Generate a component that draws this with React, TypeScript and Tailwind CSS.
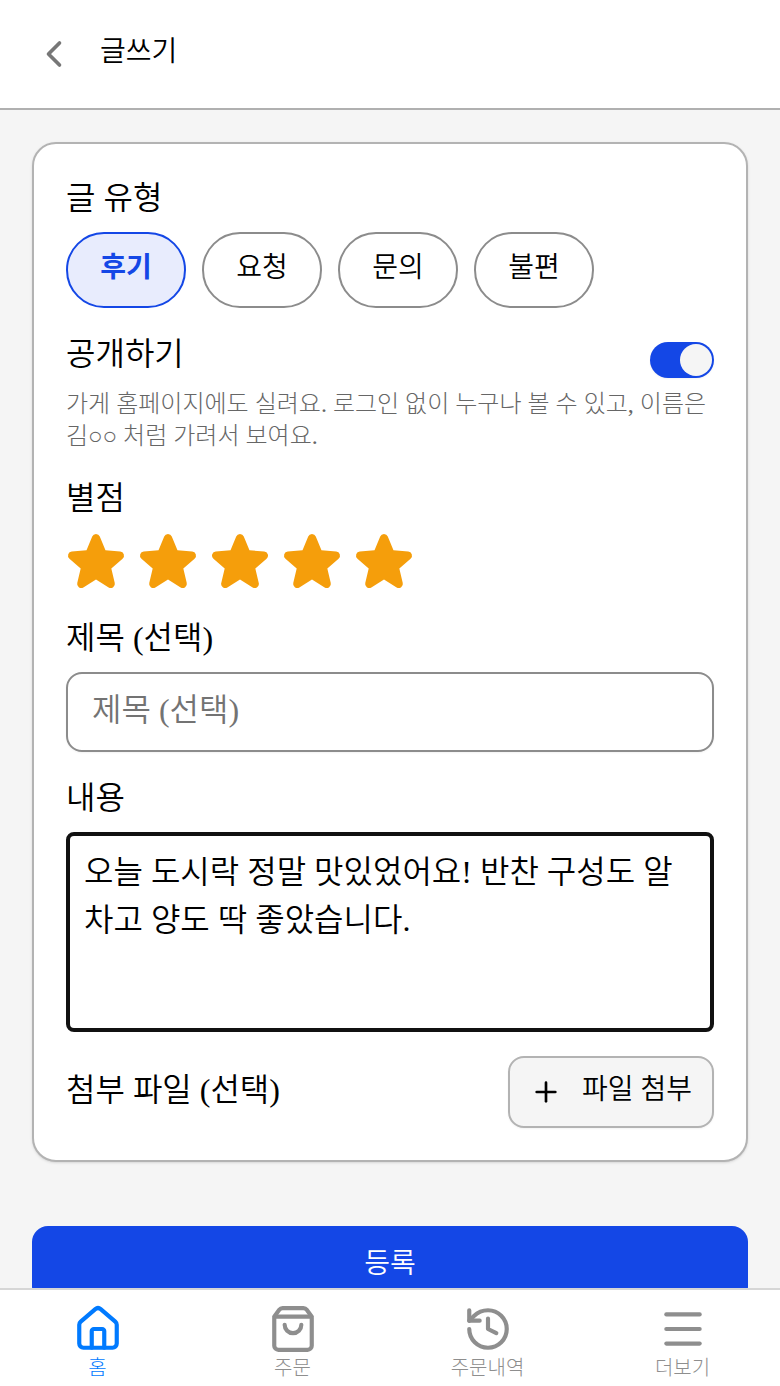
import { useState } from "react";
import type { ReactNode } from "react";
import { ChevronLeft, History, House, Menu, Plus, ShoppingBag } from "lucide-react";

const postTypes = ["후기", "요청", "문의", "불편"];

const tabs = [
  { label: "홈", Icon: House },
  { label: "주문", Icon: ShoppingBag },
  { label: "주문내역", Icon: History },
  { label: "더보기", Icon: Menu },
];

function Heading({ children }: { children: ReactNode }) {
  return <h2 className="text-[32px] leading-[48px]">{children}</h2>;
}

function StarIcon({ filled }: { filled: boolean }) {
  return (
    <svg viewBox="8 8 240 240" className={filled ? "size-[60px] fill-[#f59e0b]" : "size-[60px] fill-[#d4d4d4]"} aria-hidden="true">
      <path d="M234.29,114.85l-45,38.83L203,211.75a16.4,16.4,0,0,1-24.5,17.82L128,198.49,77.47,229.57A16.4,16.4,0,0,1,53,211.75l13.76-58.07-45-38.83A16.46,16.46,0,0,1,31.08,86l59-4.76,22.76-55.08a16.36,16.36,0,0,1,30.27,0l22.75,55.08,59,4.76a16.46,16.46,0,0,1,9.37,28.86Z" />
    </svg>
  );
}

export default function App() {
  const [type, setType] = useState("후기");
  const [isPublic, setIsPublic] = useState(true);
  const [rating, setRating] = useState(5);
  const [title, setTitle] = useState("");
  const [body, setBody] = useState("오늘 도시락 정말 맛있었어요! 반찬 구성도 알차고 양도 딱 좋았습니다.");

  return (
    <div className="flex h-screen flex-col bg-[#f5f5f5] font-['Liberation_Serif','Noto_Sans_CJK_KR',serif] font-[350] text-black">
      <header className="flex shrink-0 items-center gap-5 border-b-2 border-[#b0b0b0] bg-white px-7 py-[26px]">
        <button type="button" aria-label="뒤로" className="flex size-[52px] items-center justify-center text-[#777]">
          <ChevronLeft size={44} strokeWidth={2} />
        </button>
        <h1 className="pb-1 text-[28px] leading-[52px]">글쓰기</h1>
      </header>

      <main className="min-h-0 flex-1 overflow-hidden px-8 pt-8">
        <section className="rounded-3xl border-2 border-[#b3b3b3] bg-white p-8 pt-[30px] shadow-sm">
          <Heading>글 유형</Heading>
          <div className="mt-2.5 flex gap-4">
            {postTypes.map((name) => (
              <button
                key={name}
                type="button"
                aria-pressed={type === name}
                onClick={() => setType(name)}
                className={
                  type === name
                    ? "h-[76px] w-[120px] rounded-full border-2 border-[#1447e6] bg-[#e8ecfd] pb-1 text-[28px] font-bold text-[#1447e6]"
                    : "h-[76px] w-[120px] rounded-full border-2 border-[#8c8c8c] pb-1 text-[28px]"
                }
              >
                {name}
              </button>
            ))}
          </div>

          <div className="mt-[22px] flex items-end justify-between">
            <label htmlFor="public" className="text-[32px] leading-[48px]">
              공개하기
            </label>
            <input
              id="public"
              type="checkbox"
              role="switch"
              checked={isPublic}
              onChange={(e) => setIsPublic(e.target.checked)}
              className="flex h-9 w-16 appearance-none items-center rounded-full bg-[#c4c4c4] p-0.5 shadow-xs before:size-8 before:rounded-full before:bg-[#f5f5f5] checked:justify-end checked:bg-[#1447e6]"
            />
          </div>
          <p className="mt-2.5 text-2xl leading-8 font-light text-[#666]">
            가게 홈페이지에도 실려요. 로그인 없이 누구나 볼 수 있고, 이름은 김○○ 처럼 가려서 보여요.
          </p>

          <div className="mt-[22px]">
            <Heading>별점</Heading>
            <div className="mt-2.5 flex gap-3">
              {[1, 2, 3, 4, 5].map((n) => (
                <button key={n} type="button" aria-label={`${n}점`} onClick={() => setRating(n)}>
                  <StarIcon filled={n <= rating} />
                </button>
              ))}
            </div>
          </div>

          <div className="mt-[22px]">
            <label htmlFor="title" className="block text-[32px] leading-[48px]">
              제목 (선택)
            </label>
            <input
              id="title"
              value={title}
              onChange={(e) => setTitle(e.target.value)}
              placeholder="제목 (선택)"
              className="mt-2.5 block h-20 w-full rounded-2xl border-2 border-[#8c8c8c] px-6 pb-1 text-[32px] shadow-xs placeholder:text-[#737373]"
            />
          </div>

          <div className="mt-[22px]">
            <label htmlFor="body" className="block text-[32px] leading-[48px]">
              내용
            </label>
            <textarea
              id="body"
              value={body}
              onChange={(e) => setBody(e.target.value)}
              className="mt-2.5 block h-[200px] w-full resize-none rounded-lg border-4 border-[#111] px-3.5 py-3 text-[32px] leading-[48px] break-all outline-none"
            />
          </div>

          <div className="mt-6 flex items-center justify-between">
            <div className="pb-1">
              <Heading>첨부 파일 (선택)</Heading>
            </div>
            <button
              type="button"
              className="flex h-[72px] items-center gap-5 rounded-2xl border-2 border-[#b3b3b3] bg-[#f5f5f5] px-5 text-[28px] shadow-xs"
            >
              <Plus size={32} strokeWidth={2} />
              <span className="pb-1">파일 첨부</span>
            </button>
          </div>
        </section>

        <button type="button" className="mt-16 h-[76px] w-full rounded-2xl bg-[#1447e6] text-[28px] text-white">
          등록
        </button>
      </main>

      <nav className="grid shrink-0 grid-cols-4 border-t-2 border-[#d6d6d6] bg-white pt-3.5 pb-1">
        {tabs.map(({ label, Icon }, i) => (
          <a
            key={label}
            href="#"
            aria-current={i === 0 ? "page" : undefined}
            className={i === 0 ? "flex flex-col items-center text-[#007aff]" : "flex flex-col items-center text-[#8e8e8e]"}
          >
            <Icon size={50} strokeWidth={2} />
            <span className="text-xl leading-7 font-light">{label}</span>
          </a>
        ))}
      </nav>
    </div>
  );
}
